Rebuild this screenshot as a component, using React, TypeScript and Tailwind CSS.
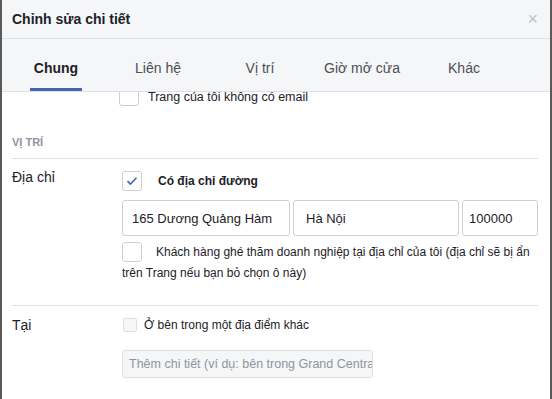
import React from 'react';

const tabs = ['Chung', 'Liên hệ', 'Vị trí', 'Giờ mở cửa', 'Khác'];

function Box({ checked = false }: { checked?: boolean }) {
  return (
    <span className="inline-flex h-[20px] w-[20px] shrink-0 items-center justify-center rounded-[3px] border border-[#ccd0d5] bg-white">
      {checked && (
        <svg width="12" height="10" viewBox="0 0 12 10" fill="none">
          <path d="M1.5 5.2 L4.4 8 L10.5 1.8" stroke="#4267b2" strokeWidth="1.6" />
        </svg>
      )}
    </span>
  );
}

export default function App() {
  return (
    <div
      className="h-[399px] w-[552px] overflow-hidden border-x-2 border-[#5a5a5a] bg-white text-[#1d2129]"
      style={{ fontFamily: '"Liberation Sans", Arial, sans-serif' }}
    >
      <div className="flex h-[39px] items-center justify-between border-b border-[#dddfe2] bg-[#f5f6f7] pl-[10px] pr-[12px]">
        <span className="text-[14px] font-bold">Chỉnh sửa chi tiết</span>
        <span className="text-[18px] leading-none text-[#bec3c9]">×</span>
      </div>

      <div className="flex h-[53px] border-b border-[#dddfe2] bg-[#f5f6f7] pl-[3px]">
        {tabs.map((t, i) => (
          <div key={t} className="flex w-[102px] justify-center">
            <div
              className={
                i === 0
                  ? 'flex items-center border-b-[3px] border-[#4267b2] px-[4px] pt-[9px] text-[14px] font-bold text-[#1d2129]'
                  : 'flex items-center border-b-[3px] border-transparent px-[4px] pt-[9px] text-[14px] text-[#4b4f56]'
              }
            >
              {t}
            </div>
          </div>
        ))}
      </div>

      <div className="relative h-[306px] overflow-hidden pl-[10px] pr-[12px]">
        <div className="-mt-[7px] flex items-center gap-[9px] pl-[107px] text-[12.5px]">
          <Box />
          <span className="pt-[3px]">Trang của tôi không có email</span>
        </div>

        <div className="mt-[27px] border-b border-[#dddfe2] pb-[8px] text-[11px] font-bold text-[#90949c]">
          VỊ TRÍ
        </div>

        <div className="flex pt-[11px]">
          <div className="-mt-[1px] w-[110px] shrink-0 text-[14px] leading-[16px]">Địa chỉ</div>
          <div className="flex-1">
            <div className="flex items-center gap-[16px] pt-[1px]">
              <Box checked />
              <span className="text-[12px] font-bold">Có địa chỉ đường</span>
            </div>
            <div className="mt-[9px] flex gap-[3px]">
              <div className="flex h-[36px] w-[168px] shrink-0 items-center whitespace-nowrap rounded-[3px] border border-[#ccd0d5] px-[9px] text-[13px]">
                165 Dương Quảng Hàm
              </div>
              <div className="flex h-[36px] w-[166px] shrink-0 items-center rounded-[3px] border border-[#ccd0d5] px-[12px] text-[13px]">
                Hà Nội
              </div>
              <div className="flex h-[36px] w-[76px] shrink-0 items-center rounded-[3px] border border-[#ccd0d5] px-[6px] text-[13px]">
                100000
              </div>
            </div>
            <div className="mt-[6px] text-[12px] leading-[21px]">
              <span className="float-left mr-[14px] flex">
                <Box />
              </span>
              Khách hàng ghé thăm doanh nghiệp tại địa chỉ của tôi (địa chỉ sẽ bị ẩn trên Trang nếu bạn bỏ chọn ô này)
            </div>
          </div>
        </div>

        <div className="mt-[21px] flex border-t border-[#dddfe2] pt-[9px]">
          <div className="w-[110px] shrink-0 text-[14px]">Tại</div>
          <div className="flex-1">
            <div className="flex items-center gap-[7px] pl-[1px] pt-[1px]">
              <span className="h-[14px] w-[14px] rounded-[2px] border border-[#dddfe2] bg-[#f5f6f7]" />
              <span className="text-[12px]">Ở bên trong một địa điểm khác</span>
            </div>
            <div className="mt-[16px] flex h-[28px] w-[251px] items-center overflow-hidden whitespace-nowrap rounded-[3px] border border-[#dddfe2] bg-[#f5f6f7] px-[6px] text-[12.5px] text-[#90949c]">
              Thêm chi tiết (ví dụ: bên trong Grand Central
            </div>
          </div>
        </div>
      </div>
    </div>
  );
}
